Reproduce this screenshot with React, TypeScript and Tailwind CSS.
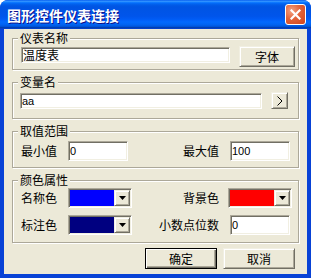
const sunken =
  "border border-t-[#ACA899] border-l-[#ACA899] border-r-white border-b-white shadow-[inset_1px_1px_0_#716F64,inset_-1px_-1px_0_#F1EFE2] bg-white";
const raised =
  "border border-t-[#F1EFE2] border-l-[#F1EFE2] border-r-[#716F64] border-b-[#716F64] shadow-[inset_1px_1px_0_#fff,inset_-1px_-1px_0_#ACA899] bg-[#ECE9D8]";

function Group({ title, className = "", children }: { title: string; className?: string; children: React.ReactNode }) {
  return (
    <fieldset className={`min-w-0 border border-[#ACA899] shadow-[inset_1px_1px_0_#fff,1px_1px_0_#fff] ${className}`}>
      <legend className="ml-[5px] px-[2px] bg-[#ECE9D8] text-[12px] leading-[12px]">{title}</legend>
      {children}
    </fieldset>
  );
}

function TextBox({ value, className = "" }: { value: string; className?: string }) {
  return (
    <div className={`${sunken} h-[20px] flex items-center px-px font-['Liberation_Sans',sans-serif] text-[11px] ${className}`}>
      {value}
    </div>
  );
}

function ColorCombo({ color, className = "" }: { color: string; className?: string }) {
  return (
    <div className={`${sunken} flex h-[20px] w-[64px] p-px ${className}`}>
      <div className="flex-1" style={{ backgroundColor: color }} />
      <div className={`${raised} w-[16px] flex items-center justify-center`}>
        <svg width="7" height="4" viewBox="0 0 7 4">
          <polygon points="0,0 7,0 3.5,4" fill="#000" />
        </svg>
      </div>
    </div>
  );
}

export default function App() {
  return (
    <div className="w-[311px] h-[278px] flex flex-col rounded-t-[8px] overflow-hidden bg-[#0842D6] text-black font-['Noto_Sans_CJK_SC',sans-serif]">
      <div className="h-[29px] shrink-0 flex items-center pl-[7px] pr-[5px] bg-[linear-gradient(180deg,#0058EE_0%,#3593FF_4%,#288EFF_6%,#127DFF_8%,#036FFC_10%,#0262EE_14%,#0057E5_20%,#0054E3_24%,#0055EB_56%,#005BF5_66%,#026AFE_76%,#0062EF_86%,#0052D6_92%,#0040AB_94%,#0842D6_100%)]">
        <span className="text-white font-bold text-[14px] leading-[16px] [text-shadow:1px_1px_#0F1089]">
          图形控件仪表连接
        </span>
        <div className="ml-auto w-[21px] h-[21px] rounded-[3px] border border-white flex items-center justify-center bg-[radial-gradient(circle_at_30%_30%,#F4A283_0%,#E2633A_45%,#D2431B_100%)]">
          <svg width="11" height="11" viewBox="0 0 11 11">
            <path d="M1.5 1.5 L9.5 9.5 M9.5 1.5 L1.5 9.5" stroke="#fff" strokeWidth="2.2" strokeLinecap="square" />
          </svg>
        </div>
      </div>

      <div className="flex-1 mx-[4px] mb-[4px] bg-[#ECE9D8] px-[8px] pt-[3px] flex flex-col text-[12px] leading-[14px]">
        <Group title="仪表名称">
          <div className="flex items-start pl-[8px] pt-[2px] pb-[2px]">
            <div className={`${sunken} mt-px h-[16px] w-[209px] px-px flex items-center`}>温度表</div>
            <button className={`${raised} ml-[9px] h-[21px] w-[56px] flex items-center justify-center`}>字体</button>
          </div>
        </Group>

        <Group title="变量名" className="mt-[6px]">
          <div className="flex items-start pl-[7px] pt-[4px] pb-[9px]">
            <div className={`${sunken} mt-px h-[16px] w-[242px] px-px flex items-center font-['Liberation_Sans',sans-serif] text-[11px]`}>
              aa
            </div>
            <button className={`${raised} ml-[9px] h-[17px] w-[17px] flex items-center justify-center`}>
              <svg width="6" height="10" viewBox="0 0 6 10">
                <polyline points="0.5,0.5 5,5 0.5,9.5" fill="none" stroke="#000" strokeWidth="1" />
              </svg>
            </button>
          </div>
        </Group>

        <Group title="取值范围" className="mt-[6px]">
          <div className="flex items-center pl-[8px] pr-[6px] pt-[4px] pb-[6px]">
            <span className="w-[47px]">最小值</span>
            <TextBox value="0" className="w-[60px]" />
            <span className="flex-1 text-right">最大值</span>
            <div className="w-[73px] flex">
              <TextBox value="100" className="ml-[11px] w-[60px]" />
            </div>
          </div>
        </Group>

        <Group title="颜色属性" className="mt-[6px]">
          <div className="flex flex-col gap-[7px] pl-[8px] pr-[6px] pt-[2px] pb-[7px]">
            <div className="flex items-center">
              <span className="w-[47px]">名称色</span>
              <ColorCombo color="#0000FF" />
              <span className="flex-1 text-right">背景色</span>
              <div className="w-[73px] flex">
                <ColorCombo color="#FF0000" className="ml-[9px]" />
              </div>
            </div>
            <div className="flex items-center">
              <span className="w-[47px]">标注色</span>
              <ColorCombo color="#000080" />
              <span className="flex-1 text-right">小数点位数</span>
              <div className="w-[73px] flex">
                <TextBox value="0" className="ml-[11px] w-[60px]" />
              </div>
            </div>
          </div>
        </Group>

        <div className="mt-[5px] flex justify-end gap-[6px] pr-[4px]">
          <button className="h-[21px] w-[72px] border border-black shadow-[inset_1px_1px_0_#fff,inset_-1px_-1px_0_#716F64,inset_-2px_-2px_0_#ACA899] bg-[#ECE9D8] flex items-center justify-center">
            确定
          </button>
          <button className={`${raised} h-[21px] w-[72px] flex items-center justify-center`}>取消</button>
        </div>
      </div>
    </div>
  );
}
